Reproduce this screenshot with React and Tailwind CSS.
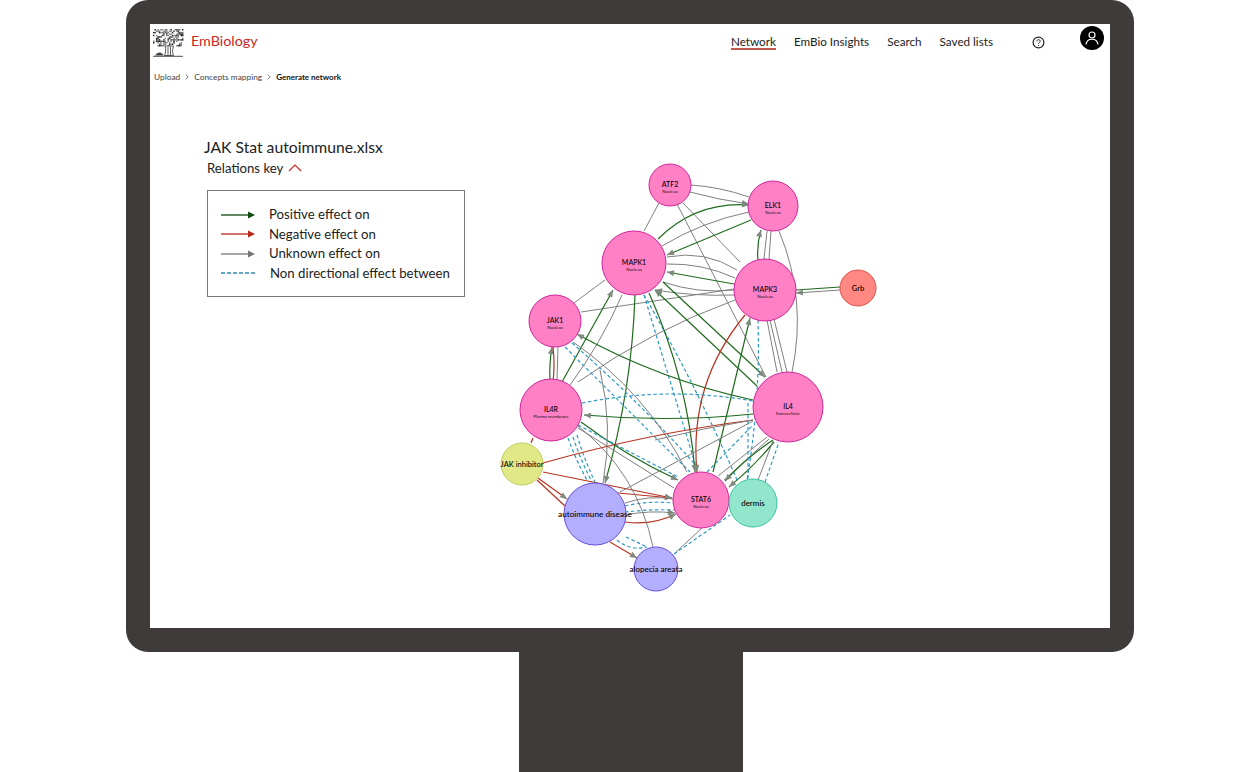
const FONT = 'font-["Lato","Noto_Sans",sans-serif]';

const COLORS = { g: '#1f6b1f', r: '#b8321f', k: '#7f7f7f', b: '#2c9ac2' };

// x1, y1, x2, y2, bend, colour, arrow at the end
const edges = [
  [691, 185, 749, 197, -4, 'k'],
  [690, 192, 749, 204, 2, 'k', 1],
  [659, 203, 644, 231, 0, 'k'],
  [677, 204, 766, 377, 0, 'k'],
  [683, 203, 740, 262, 0, 'k'],
  [658, 239, 749, 205, -22, 'g', 1],
  [662, 246, 749, 212, -8, 'k'],
  [751, 220, 667, 255, 0, 'g', 1],
  [758, 260, 761, 230, -3, 'g', 1],
  [764, 259, 767, 231, 0, 'k'],
  [769, 259, 771, 231, 0, 'k'],
  [779, 231, 792, 372, -22, 'k'],
  [737, 270, 667, 257, 14, 'k'],
  [735, 278, 667, 264, 8, 'k'],
  [734, 284, 667, 272, 0, 'g', 1],
  [734, 290, 663, 282, -8, 'k'],
  [734, 295, 655, 290, -4, 'k', 1],
  [581, 312, 734, 289, 0, 'k'],
  [574, 303, 605, 280, 0, 'k'],
  [562, 382, 613, 290, 0, 'g', 1],
  [570, 385, 622, 295, 6, 'k'],
  [578, 382, 735, 300, -12, 'k'],
  [635, 295, 605, 483, -12, 'g', 1],
  [644, 295, 697, 470, 0, 'b'],
  [644, 295, 737, 480, -6, 'b'],
  [649, 293, 695, 472, -16, 'g', 1],
  [757, 386, 655, 290, 0, 'g', 1],
  [663, 282, 765, 377, 0, 'g', 1],
  [753, 400, 577, 334, -14, 'g', 1],
  [565, 347, 690, 472, 0, 'b'],
  [572, 343, 700, 470, -6, 'b'],
  [573, 342, 687, 472, -22, 'k'],
  [550, 382, 552, 347, -2, 'g', 1],
  [553, 382, 553, 347, 2, 'r'],
  [557, 380, 558, 347, 0, 'k'],
  [745, 315, 697, 472, 34, 'r', 1],
  [713, 472, 750, 318, 0, 'g', 1],
  [758, 320, 747, 480, -8, 'b'],
  [767, 320, 777, 372, 0, 'k'],
  [770, 320, 782, 372, 0, 'k'],
  [774, 319, 787, 372, 0, 'k'],
  [840, 287, 796, 290, 0, 'g'],
  [840, 290, 796, 293, 0, 'k', 1],
  [582, 403, 753, 401, -16, 'b'],
  [753, 414, 584, 415, -8, 'g', 1],
  [581, 422, 678, 480, 6, 'g', 1],
  [578, 428, 674, 488, 0, 'k'],
  [578, 425, 678, 477, 0, 'b'],
  [568, 438, 588, 482, 2, 'b'],
  [573, 437, 592, 482, 2, 'b'],
  [577, 435, 595, 482, 2, 'b'],
  [600, 370, 603, 483, -12, 'k'],
  [543, 463, 753, 420, -8, 'r', 0],
  [655, 440, 753, 420, -2, 'k'],
  [543, 472, 672, 498, 0, 'r', 1],
  [538, 478, 567, 499, 0, 'r', 1],
  [537, 480, 565, 506, 0, 'r'],
  [533, 438, 531, 443, 0, 'r'],
  [618, 493, 672, 498, 0, 'r', 1],
  [625, 503, 673, 499, -6, 'k'],
  [625, 506, 673, 503, -4, 'b'],
  [625, 512, 675, 510, -2, 'b'],
  [625, 515, 675, 513, -4, 'k', 1],
  [625, 522, 676, 514, 8, 'r', 1],
  [620, 492, 753, 421, 0, 'k'],
  [718, 476, 767, 437, 0, 'k'],
  [707, 472, 753, 425, 0, 'b'],
  [724, 480, 769, 439, 0, 'k'],
  [773, 440, 725, 481, 4, 'g', 1],
  [774, 442, 729, 487, -3, 'g', 1],
  [758, 480, 773, 441, 0, 'k'],
  [765, 482, 779, 442, 0, 'b'],
  [748, 403, 748, 480, 0, 'b'],
  [610, 542, 637, 558, 0, 'r', 1],
  [617, 540, 647, 547, 8, 'b'],
  [626, 537, 647, 547, 0, 'b'],
  [653, 547, 578, 426, 26, 'k'],
  [674, 554, 702, 528, 0, 'k'],
  [674, 554, 730, 515, 0, 'b'],
];

const nodes = [
  { x: 670, y: 185, r: 21, name: 'ATF2', sub: 'Nucleus', size: 7 },
  { x: 773, y: 206, r: 25, name: 'ELK1', sub: 'Nucleus', size: 7 },
  { x: 634, y: 263, r: 32, name: 'MAPK1', sub: 'Nucleus', size: 7 },
  { x: 765, y: 290, r: 31, name: 'MAPK3', sub: 'Nucleus', size: 7 },
  { x: 858, y: 288, r: 18, name: 'Grb', kind: 'coral', size: 7.5 },
  { x: 555, y: 321, r: 26, name: 'JAK1', sub: 'Nucleus', size: 7 },
  { x: 551, y: 410, r: 31, name: 'IL4R', sub: 'Plasma membrane', size: 7 },
  { x: 788, y: 407, r: 35, name: 'IL4', sub: 'Extracellular', size: 7 },
  { x: 522, y: 464, r: 21, name: 'JAK inhibitor', kind: 'lime', size: 7.5 },
  { x: 701, y: 500, r: 28, name: 'STAT6', sub: 'Nucleus', size: 7 },
  { x: 753, y: 503, r: 24, name: 'dermis', kind: 'teal', size: 8 },
  { x: 595, y: 514, r: 31, name: 'autoimmune disease', kind: 'violet', size: 8.2 },
  { x: 656, y: 569, r: 22, name: 'alopecia areata', kind: 'violet', size: 8 },
];

const NODE_COLORS = {
  pink: ['#ff80c4', '#d0259a'],
  coral: ['#ff8882', '#e0524c'],
  lime: ['#e0e888', '#c2cc5c'],
  teal: ['#92e6cc', '#3cc4a4'],
  violet: ['#b4aeff', '#6650dc'],
};

function Edge({ e }) {
  const [x1, y1, x2, y2, bend, c, arrow] = e;
  const dx = x2 - x1;
  const dy = y2 - y1;
  const len = Math.hypot(dx, dy) || 1;
  const cx = (x1 + x2) / 2 + (-dy / len) * bend;
  const cy = (y1 + y2) / 2 + (dx / len) * bend;
  const angle = (Math.atan2(y2 - cy, x2 - cx) * 180) / Math.PI;
  return (
    <g>
      <path
        d={`M${x1} ${y1}Q${cx} ${cy} ${x2} ${y2}`}
        fill="none"
        stroke={COLORS[c]}
        strokeWidth={c === 'k' ? 1 : 1.2}
        strokeDasharray={c === 'b' ? '3.5 2.5' : undefined}
      />
      {arrow ? (
        <polygon
          points="0,0 -7,-3 -7,3"
          fill="#7f8a7f"
          transform={`translate(${x2} ${y2}) rotate(${angle})`}
        />
      ) : null}
    </g>
  );
}

function Node({ n }) {
  const [fill, stroke] = NODE_COLORS[n.kind || 'pink'];
  return (
    <g>
      <circle cx={n.x} cy={n.y} r={n.r} fill={fill} stroke={stroke} strokeWidth="1" />
      <text x={n.x} y={n.sub ? n.y + 1.500 : n.y + 2.500} textAnchor="middle" fontSize={n.size} fill="#000" fontWeight="500">
        {n.name}
      </text>
      {n.sub ? (
        <text x={n.x} y={n.y + 8} textAnchor="middle" fontSize="4.400" fill="#111">
          {n.sub}
        </text>
      ) : null}
    </g>
  );
}

function Network() {
  return (
    <svg className="block shrink-0 ml-[13px] mt-[24px] w-[400px] h-[445px]" viewBox="490 155 400 445">
      {edges.map((e, i) => (
        <Edge key={i} e={e} />
      ))}
      {nodes.map((n) => (
        <Node key={n.name} n={n} />
      ))}
    </svg>
  );
}

function TreeLogo() {
  const cells = [];
  for (let row = 0; row < 12; row++) {
    for (let col = 0; col < 21; col++) {
      const h = Math.abs(Math.sin(col * 12.9898 + row * 78.233) * 43758.5453) % 1;
      if (h < 0.42) continue;
      cells.push(
        <rect
          key={`${row}-${col}`}
          x={col * 1.450}
          y={row * 1.450}
          width="1.450"
          height="1.450"
          fill={h > 0.75 ? '#222' : '#777'}
        />
      );
    }
  }
  return (
    <svg className="w-[31px] h-[28px] shrink-0" viewBox="0 0 31 28">
      {cells}
      <path d="M12 17c1 3 1 6-.5 9.500h9c-1.500-3.500-1-6 0-9.500z" fill="#fff" stroke="#333" strokeWidth=".8" />
      <path d="M15 18v8M17.500 18v8" stroke="#333" strokeWidth=".8" />
      <path d="M2 26.500c2-3 5-4 7-2l2 2z" fill="#444" />
      <path d="M0 27.300h30" stroke="#222" strokeWidth=".8" />
    </svg>
  );
}

function KeyArrow({ color }) {
  return (
    <svg className="w-[34px] h-[10px] shrink-0" viewBox="0 0 34 10">
      <path d="M0 5h28" stroke={color} strokeWidth="1.300" />
      <polygon points="34,5 27,1.500 27,8.500" fill={color} />
    </svg>
  );
}

function Crumb() {
  return (
    <svg className="mx-[5px] w-[4px] h-[6px] shrink-0" viewBox="0 0 4 6" fill="none" stroke="#444" strokeWidth=".7">
      <path d="M.8.6 3.200 3 .8 5.400" />
    </svg>
  );
}

const keyRows = [
  { label: 'Positive effect on', color: '#0f4a0f' },
  { label: 'Negative effect on', color: '#b8281c' },
  { label: 'Unknown effect on', color: '#767676' },
];

export default function App() {
  return (
    <div className={`${FONT} w-[1260px] h-[772px] bg-white flex flex-col overflow-hidden`}>
      <div className="ml-[126px] w-[1008px] h-[652px] shrink-0 bg-[#3f3b3b] rounded-[22px] p-[24px]">
        <div className="w-[960px] h-[604px] bg-white flex flex-col">
          {/* Header */}
          <header className="flex items-start h-[47px] pl-[3px] pt-[5px] shrink-0">
            <TreeLogo />
            <span className="ml-[7px] mt-[2px] text-[14.300px] leading-[20px] text-[#c8281e]">EmBiology</span>
            <nav className="ml-auto flex items-start text-[#222] text-[11.700px] leading-[16px] mt-[4px]">
              <span className="border-b-2 border-[#c4574c] h-[17px]">Network</span>
              <span className="ml-[18px]">EmBio Insights</span>
              <span className="ml-[18px]">Search</span>
              <span className="ml-[18px]">Saved lists</span>
              <svg className="ml-[39px] mt-[3px] w-[13px] h-[13px]" viewBox="0 0 13 13" fill="none" stroke="#222" strokeWidth="1.200">
                <circle cx="6.500" cy="6.500" r="5.400" />
                <path d="M4.900 5.200c0-2.100 3.300-2.100 3.300 0 0 1.200-1.600 1.200-1.600 2.500" strokeWidth="1" />
                <path d="M6.600 9v.9" strokeWidth="1" />
              </svg>
            </nav>
            <div className="ml-[35px] mr-[6px] -mt-[3px] w-[24px] h-[24px] rounded-full bg-black flex items-center justify-center">
              <svg className="w-[16px] h-[16px]" viewBox="0 0 16 16" fill="none" stroke="#fff" strokeWidth="1.200">
                <circle cx="8" cy="5" r="3" />
                <path d="M2 14.500c.8-7 11.200-7 12 0" />
              </svg>
            </div>
          </header>

          {/* Breadcrumbs */}
          <div className="flex items-center h-[12px] ml-[4px] text-[8.350px] leading-[12px] text-[#444] shrink-0">
            <span>Upload</span>
            <Crumb />
            <span>Concepts mapping</span>
            <Crumb />
            <span className="text-[#111] font-bold text-[8px]">Generate network</span>
          </div>

          {/* Main */}
          <main className="flex flex-1 min-h-0 pt-[48px]">
            <div className="w-[327px] shrink-0 pl-[54px] pt-[6px]">
              <h1 className="text-[15.700px] leading-[20px] text-[#222]">JAK Stat autoimmune.xlsx</h1>
              <div className="ml-[3px] mt-[1px] flex items-center text-[13.200px] leading-[20px] text-[#222]">
                <span>Relations key</span>
                <svg className="ml-[5px] w-[14px] h-[8px]" viewBox="0 0 14 8" fill="none" stroke="#c8281e" strokeWidth="1.200">
                  <path d="M1 7l6-6 6 6" />
                </svg>
              </div>
              <div className="ml-[3px] mt-[12px] w-[258px] h-[107px] border border-[#777] px-[13px] pt-[14px] text-[13.200px] text-[#222]">
                {keyRows.map((row) => (
                  <div key={row.label} className="flex items-center h-[19.500px] leading-[19px]">
                    <KeyArrow color={row.color} />
                    <span className="ml-[14px]">{row.label}</span>
                  </div>
                ))}
                <div className="flex items-center h-[19.500px] leading-[19px]">
                  <svg className="w-[34px] h-[4px] shrink-0" viewBox="0 0 34 4">
                    <path d="M0 2h34" stroke="#2c8cb4" strokeWidth="1.300" strokeDasharray="4 2" />
                  </svg>
                  <span className="ml-[15px] whitespace-nowrap">Non directional effect between</span>
                </div>
              </div>
            </div>
            <Network />
          </main>
        </div>
      </div>
      <div className="ml-[519px] w-[224px] flex-1 bg-[#3f3b3b]" />
    </div>
  );
}
